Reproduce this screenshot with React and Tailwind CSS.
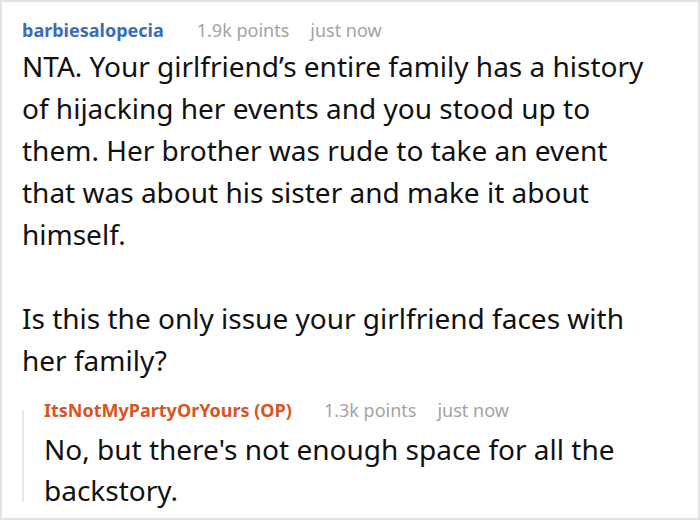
export default function App() {
  return (
    <div className="w-[700px] h-[520px] bg-white" style={{ fontFamily: '"Noto Sans", "Open Sans", sans-serif' }}>
      <div className="w-full h-full border-2 border-[#e3e3e3] pl-[20px] pr-4 pt-[15px] overflow-hidden">
        <div className="flex items-baseline text-[18px] leading-[26px]">
          <span className="font-bold text-[#3b6bbd]">barbiesalopecia</span>
          <span className="ml-[33px] text-[#a3a3a3]">1.9k points</span>
          <span className="ml-[21px] text-[#a3a3a3]">just now</span>
        </div>
        <p className="text-[28px] leading-[42px] text-[#111] mt-[2px] w-[640px]">
          NTA. Your girlfriend’s entire family has a history of hijacking her events and you stood up to them. Her brother was rude to take an event that was about his sister and make it about himself.
        </p>
        <p className="text-[28px] leading-[42px] text-[#111] mt-[42px] w-[640px]">
          Is this the only issue your girlfriend faces with her family?
        </p>
        <div className="mt-[16px] flex">
          <div className="w-[2px] bg-[#e6e6e6] mt-[13px] mb-[9px] shrink-0" />
          <div className="pl-[20px]">
            <div className="flex items-baseline text-[18px] leading-[26px]">
              <span className="font-bold text-[#d9541f]">ItsNotMyPartyOrYours (OP)</span>
              <span className="ml-[32px] text-[#a3a3a3]">1.3k points</span>
              <span className="ml-[21px] text-[#a3a3a3]">just now</span>
            </div>
            <p className="text-[28px] leading-[41px] text-[#111] mt-[6px] w-[600px]">
              No, but there's not enough space for all the backstory.
            </p>
          </div>
        </div>
      </div>
    </div>
  );
}
